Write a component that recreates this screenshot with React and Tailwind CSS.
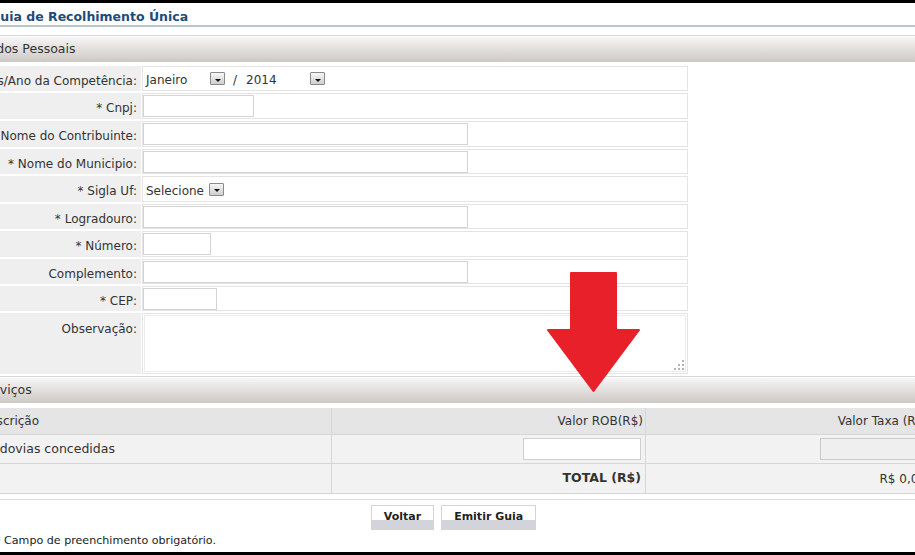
import React from "react";

function DropBtn() {
  return (
    <span className="flex w-[15px] h-[13px] items-center justify-center border border-[#8a8a8a] bg-gradient-to-b from-[#f7f7f7] to-[#cfcfcf] rounded-[1px]">
      <span className="mt-[3px] w-0 h-0 border-l-[3px] border-r-[3px] border-t-[3px] border-l-transparent border-r-transparent border-t-[#111]" />
    </span>
  );
}

function FakeSelect({ text, w }) {
  return (
    <div className={`flex items-center justify-between bg-white h-[22px] pl-[3px] pr-[2px] ${w}`}>
      <span className="pt-[3px] text-[12px]">{text}</span>
      <DropBtn />
    </div>
  );
}

function Row({ label, h, children }) {
  return (
    <div className={`flex gap-[1px] ${h}`}>
      <div className="w-[161px] shrink-0 bg-[#efefef] flex justify-end items-center pt-[4px] pr-[4px] text-[12px] text-[#333] whitespace-nowrap">
        {label}
      </div>
      <div className="w-[546px] shrink-0 bg-white border border-[#e4e4e4] flex items-center">
        {children}
      </div>
    </div>
  );
}

function Input({ w }) {
  return <div className={`h-[22px] bg-white border border-[#d3d3d3] ${w}`} />;
}

function SectionHeader({ title }) {
  return (
    <div className="border-t border-[#d8d8d8] pt-[1px]">
      <div className="h-[25px] bg-gradient-to-b from-[#f6f6f6] to-[#cdc8c4] flex items-center text-[12.5px] text-[#333] whitespace-nowrap">
        <span className="-ml-[1px]">{title}</span>
      </div>
    </div>
  );
}

export default function App() {
  return (
    <div className="relative w-[915px] h-[555px] overflow-hidden bg-white flex flex-col font-['DejaVu_Sans',Verdana,sans-serif] text-[11.5px] text-[#333]">
      <div className="h-[3px] bg-black shrink-0" />
      <div className="-ml-[20px] w-[950px] flex flex-col">
        <div className="pl-[10px] pt-[5px] text-[12.5px] leading-[17px] font-bold text-[#1d4c7a] border-b-2 border-[#b7c6cb] whitespace-nowrap">
          Guia de Recolhimento Única
        </div>

        <div className="mt-[8px]">
          <SectionHeader title="Dados Pessoais" />
        </div>

        <div className="mt-[4px] flex flex-col gap-[2px]">
          <Row label="Mês/Ano da Competência:" h="h-[25px]">
            <div className="flex items-center">
              <FakeSelect text="Janeiro" w="w-[84px]" />
              <span className="ml-[6px] mr-[6px] pt-[3px] text-[12px]">/</span>
              <FakeSelect text="2014" w="w-[84px]" />
            </div>
          </Row>
          <Row label="* Cnpj:" h="h-[26px]">
            <Input w="w-[111px]" />
          </Row>
          <Row label="* Nome do Contribuinte:" h="h-[26px]">
            <Input w="w-[325px]" />
          </Row>
          <Row label="* Nome do Municipio:" h="h-[25px]">
            <Input w="w-[325px]" />
          </Row>
          <Row label="* Sigla Uf:" h="h-[26px]">
            <FakeSelect text="Selecione" w="w-[83px]" />
          </Row>
          <Row label="* Logradouro:" h="h-[25px]">
            <Input w="w-[325px]" />
          </Row>
          <Row label="* Número:" h="h-[26px]">
            <Input w="w-[68px]" />
          </Row>
          <Row label="Complemento:" h="h-[25px]">
            <Input w="w-[325px]" />
          </Row>
          <Row label="* CEP:" h="h-[25px]">
            <Input w="w-[74px]" />
          </Row>
          <div className="flex gap-[1px] h-[61px]">
            <div className="w-[161px] shrink-0 bg-[#efefef] flex justify-end items-start pt-[7px] pr-[4px] text-[12px] whitespace-nowrap">
              Observação:
            </div>
            <div className="w-[546px] shrink-0 bg-white border border-[#e4e4e4] p-[1px]">
              <div className="relative h-full w-full border border-[#ececec] bg-white">
                <svg className="absolute right-[1px] bottom-[1px]" width="10" height="10" viewBox="0 0 10 10">
                  <g fill="#b5b5b5">
                    <rect x="8" y="0" width="2" height="2" />
                    <rect x="4" y="4" width="2" height="2" />
                    <rect x="8" y="4" width="2" height="2" />
                    <rect x="0" y="8" width="2" height="2" />
                    <rect x="4" y="8" width="2" height="2" />
                    <rect x="8" y="8" width="2" height="2" />
                  </g>
                </svg>
              </div>
            </div>
          </div>
        </div>

        <div className="mt-[2px]">
          <SectionHeader title="Serviços" />
        </div>

        <div className="mt-[5px] flex flex-col border-b border-[#d4d4d4]">
          <div className="flex h-[27px] bg-[#e5e5e5] border-b border-[#d6d6d6] text-[12px]">
            <div className="flex-1 flex items-center pl-0">Descrição</div>
            <div className="w-[314px] border-l border-[#d6d6d6] flex items-center justify-end pr-[2px]">Valor ROB(R$)</div>
            <div className="w-[285px] border-l border-[#d6d6d6] flex items-center justify-end pr-[2px] whitespace-nowrap">Valor Taxa (R$)</div>
          </div>
          <div className="flex h-[29px] bg-[#f2f2f2] border-b border-[#d6d6d6]">
            <div className="flex-1 flex items-center pl-[4px] text-[12.5px]">Rodovias concedidas</div>
            <div className="w-[314px] border-l border-[#d6d6d6] flex items-center justify-end pr-[4px]">
              <div className="w-[118px] h-[22px] bg-white border border-[#cfcfcf]" />
            </div>
            <div className="w-[285px] border-l border-[#d6d6d6] flex items-center justify-end pr-[2px]">
              <div className="w-[108px] h-[22px] bg-[#efefef] border border-[#c9c9c9]" />
            </div>
          </div>
          <div className="flex h-[29px] bg-[#f2f2f2]">
            <div className="flex-1" />
            <div className="w-[314px] border-l border-[#d6d6d6] flex items-center justify-end pr-[4px] font-bold text-[12.5px]">TOTAL (R$)</div>
            <div className="w-[285px] border-l border-[#d6d6d6] flex items-center justify-end pr-[4px] text-[12px] whitespace-nowrap">R$ 0,00</div>
          </div>
        </div>
        <div className="mt-[5px] h-px bg-[#dedede]" />

        <div className="mt-[5px] flex justify-center gap-[7px] pr-[3px]">
          <button className="h-[25px] px-[12px] border border-[#d4d4d4] bg-[linear-gradient(#ffffff_0%,#ffffff_62%,#d3d3db_62%,#d3d3db_100%)] font-bold text-[11px] text-[#222]">
            Voltar
          </button>
          <button className="h-[25px] px-[12px] border border-[#d4d4d4] bg-[linear-gradient(#ffffff_0%,#ffffff_62%,#d3d3db_62%,#d3d3db_100%)] font-bold text-[11px] text-[#222]">
            Emitir Guia
          </button>
        </div>

        <div className="mt-[4px] pl-[15px] leading-[14px] text-[11.1px] text-[#222] whitespace-nowrap">
          * Campo de preenchimento obrigatório.
        </div>
      </div>
      <div className="mt-auto h-[3px] bg-black shrink-0" />

      <svg className="absolute left-[545px] top-[270px]" width="98" height="125" viewBox="545 270 98 125">
        <path
          d="M571 273 L616 273 L616 330 L639 330 L593.5 391 L548 330 L571 330 Z"
          fill="#e8202a"
          stroke="#e8202a"
          strokeWidth="2"
          strokeLinejoin="round"
        />
      </svg>
    </div>
  );
}
